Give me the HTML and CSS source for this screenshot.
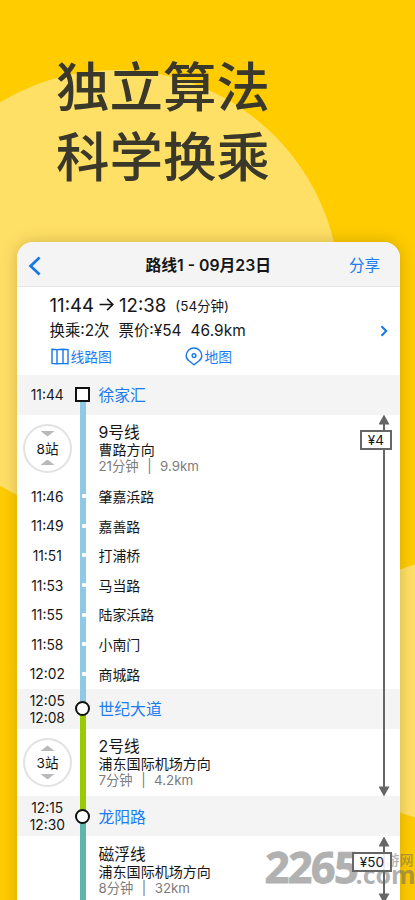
FILE: index.html
```
<!DOCTYPE html>
<html lang="zh-CN">
<head>
<meta charset="utf-8">
<title>路线1</title>
<link rel="stylesheet" href="styles.css">
</head>
<body>
<main class="poster">
  <div class="disc disc-left"></div>
  <div class="disc disc-right"></div>
  <h1 class="slogan">独立算法<br>科学换乘</h1>

  <section class="card">
    <header class="nav">
      <svg class="back" viewBox="0 0 14 20"><path d="M11.6 1.6 2.6 10l9 8.4"/></svg>
      <span class="nav-title">路线1 - 09月23日</span>
      <span class="share">分享</span>
    </header>

    <div class="summary">
      <div class="times"><span class="big">11:44</span><svg class="arrow" viewBox="0 0 14 14"><path d="M.5 7h12.4M7.6 1.8 12.9 7l-5.3 5.2"/></svg><span class="big">12:38</span><span class="dur">(54分钟)</span></div>
      <div class="facts"><span class="f1">换乘:2次</span><span class="f2">票价:¥54</span><span class="f3">46.9km</span><svg class="chev" viewBox="0 0 8 12"><path d="M1.5 1.3 6.2 6l-4.7 4.7"/></svg></div>
      <div class="links">
        <span class="link link-map"><svg class="ico-map" viewBox="0 0 18 17"><path d="M1 1.2 6 1.600l6-.4 5 .4v14.200l-5-.4-6 .4-5-.4zM6 1.600v14.200M12 1.200v14.200"/></svg>线路图</span>
        <span class="link"><svg class="ico-pin" viewBox="0 0 18 19"><path d="M9 17.8 4.2 14C2.2 12.600 1.200 10.800 1.200 8.700a7.800 7.700 0 0 1 15.600 0c0 2.100-1 3.900-3 5.300z"/><circle cx="9" cy="8.600" r="1.900"/></svg>地图</span>
      </div>
    </div>

    <div class="route">
      <div class="station first">
        <div class="when">11:44</div>
        <div class="rail"><i class="node square"></i></div>
        <div class="name">徐家汇</div>
      </div>
      <div class="leg blue">
        <div class="count closed"><i class="tri down"></i><span>8站</span><i class="tri up"></i></div>
        <div class="rail"></div>
        <div class="info"><b>9号线</b><span>曹路方向</span><small>21分钟<em>|</em>9.9km</small></div>
      </div>
      <div class="stop blue"><div class="when">11:46</div><div class="rail"></div><div class="name">肇嘉浜路</div></div>
      <div class="stop blue"><div class="when">11:49</div><div class="rail"></div><div class="name">嘉善路</div></div>
      <div class="stop blue"><div class="when">11:51</div><div class="rail"></div><div class="name">打浦桥</div></div>
      <div class="stop blue"><div class="when">11:53</div><div class="rail"></div><div class="name">马当路</div></div>
      <div class="stop blue"><div class="when">11:55</div><div class="rail"></div><div class="name">陆家浜路</div></div>
      <div class="stop blue"><div class="when">11:58</div><div class="rail"></div><div class="name">小南门</div></div>
      <div class="stop blue"><div class="when">12:02</div><div class="rail"></div><div class="name">商城路</div></div>
      <div class="station mid-a">
        <div class="when">12:05<br>12:08</div>
        <div class="rail"><i class="node round"></i></div>
        <div class="name">世纪大道</div>
      </div>
      <div class="leg green">
        <div class="count"><i class="tri up"></i><span>3站</span><i class="tri down"></i></div>
        <div class="rail"></div>
        <div class="info"><b>2号线</b><span>浦东国际机场方向</span><small>7分钟<em>|</em>4.2km</small></div>
      </div>
      <div class="station mid-b">
        <div class="when">12:15<br>12:30</div>
        <div class="rail"><i class="node round"></i></div>
        <div class="name">龙阳路</div>
      </div>
      <div class="leg teal">
        <div></div>
        <div class="rail"></div>
        <div class="info"><b>磁浮线</b><span>浦东国际机场方向</span><small>8分钟<em>|</em>32km</small></div>
      </div>

      <div class="mark"><span class="mark-num">2265</span><span class="mark-cn">手游网</span><span class="mark-com">.com</span></div>
      <div class="fare fare-a"><span class="price">¥4</span></div>
      <div class="fare fare-b"><span class="price">¥50</span></div>
    </div>
  </section>
</main>
</body>
</html>
```
FILE: styles.css
```
* { box-sizing: border-box; }
body {
  margin: 0;
  font-family: Inter, "Noto Sans CJK SC", sans-serif;
  color: #161616;
}
.poster {
  position: relative;
  width: 415px;
  height: 900px;
  overflow: hidden;
  background: #ffcc00;
  padding: 53px 15px 0 16.500px;
}
.disc { position: absolute; border-radius: 50%; background: #ffe066; }
.disc-left { left: -108px; top: 70px; width: 448px; height: 448px; }
.disc-right { left: 318px; top: 559.500px; width: 262px; height: 262px; }

.slogan {
  position: relative;
  margin: 0 0 0 39.500px;
  height: 189px;
  font-size: 53.500px;
  line-height: 70px;
  font-weight: 500;
  color: #3a382a;
}

.card {
  position: relative;
  height: 700px;
  border-radius: 16px 16px 0 0;
  background: #fff;
  box-shadow: 0 0 16px rgba(90, 70, 0, .28);
}
.nav {
  display: grid;
  grid-template-columns: 60px 1fr 60px;
  align-items: center;
  height: 44.500px;
  padding: 4.500px 0 0;
  border-bottom: 1.500px solid #e6e6e6;
  border-radius: 16px 16px 0 0;
  background: #f4f4f4;
}
.back { width: 14px; height: 20px; margin-left: 11px; }
svg path, svg circle { fill: none; stroke: #1677e6; stroke-linecap: butt; }
.back path { stroke-width: 2.700; }
.nav-title { text-align: center; font-size: 15.800px; font-weight: 600; line-height: 22px; }
.share { font-size: 15.500px; line-height: 22px; color: #1a7cf2; margin-left: 9px; }

.summary { height: 88px; padding: 6px 12px 0 33px; }
.times { display: flex; align-items: center; height: 24px; }
.big { font-size: 18.600px; line-height: 24px; }
.arrow { width: 15px; height: 15px; margin: 0 5px 0 5px; }
.arrow path { stroke: #161616; stroke-width: 1.500; }
.dur { font-size: 13.500px; line-height: 20px; margin: 2px 0 0 9px; }
.facts { display: flex; align-items: center; height: 28px; font-size: 15.400px; line-height: 26px; }
.f1 { margin-right: 9px; }
.f2 { margin-right: 9px; }
.f3 { letter-spacing: .1px; }
.chev { width: 8px; height: 12px; margin-left: auto; }
.chev path { stroke-width: 2; }
.links { display: flex; height: 24px; align-items: center; }
.link { display: flex; align-items: center; font-size: 13.800px; line-height: 22px; color: #1a7cf2; }
.link-map { width: 135px; }
.ico-map { width: 18px; height: 17px; margin: 0 2px 0 1px; }
.ico-pin { width: 18px; height: 19px; margin-right: 2px; }
.link path, .link circle { stroke-width: 1.400; }

.route { position: relative; height: 567px; }
.station, .leg, .stop { display: grid; grid-template-columns: 63.500px 5.500px 1fr; column-gap: 0; }
.station { height: 40px; background: #f4f4f4; align-items: center; }
.mid-a, .mid-b { height: 40.300px; }
.when { text-align: center; padding: 2px 2px 0 0; font-size: 13.800px; line-height: 17px; }
.rail { align-self: stretch; display: flex; align-items: center; justify-content: center; background: #8ecae6; }
.name { padding: 1.500px 0 0 13px; }
.station .name { font-size: 15.800px; line-height: 24px; color: #1a7cf2; padding-top: 3px; }
.first .rail { background: linear-gradient(#f4f4f4 50%, #8ecae6 50%); }
.mid-a .rail { background: linear-gradient(#8ecae6 50%, #99cc00 50%); }
.mid-b .rail { background: linear-gradient(#99cc00 50%, #5eb5ab 50%); }
.node { flex: none; width: 15px; height: 15px; border: 2px solid #111; background: #fff; }
.round { border-radius: 50%; }
.leg { height: 67px; }
.green .rail { background: #99cc00; }
.teal .rail { background: #5eb5ab; }
.count {
  display: flex;
  flex-direction: column;
  align-items: center;
  justify-content: space-between;
  width: 49px;
  height: 49px;
  margin: 9px 0 0 6.500px;
  padding: 5.500px 0;
  border: 2.500px solid #e2e2e2;
  border-radius: 50%;
  font-size: 13.600px;
  line-height: 16px;
}
.count span { padding-top: 1px; }
.tri { width: 14px; height: 5.500px; background: #b9b9b9; }
.tri.down { clip-path: polygon(0 0, 100% 0, 50% 100%); }
.tri.up { clip-path: polygon(0 100%, 100% 100%, 50% 0); }
.info { display: flex; flex-direction: column; padding: 8.500px 0 0 13px; }
.info b { font-size: 15.800px; font-weight: 400; line-height: 19px; }
.info span { font-size: 14.050px; line-height: 16px; }
.info small { font-size: 13.300px; line-height: 17px; color: #7c7c7c; }
.info em { font-style: normal; margin: 0 8.500px; }
.stop { height: 29.600px; align-items: center; }
.stop .name { font-size: 13.950px; line-height: 20px; }
.stop .rail::after { content: ""; width: 4px; height: 4px; background: #fff; border-radius: 1px; margin: 0 0 0 2px; }

.fare { position: absolute; right: 8px; width: 40px; display: flex; justify-content: flex-end; padding-top: 15px; }
.fare::before {
  content: "";
  position: absolute;
  right: 2.500px;
  top: 0;
  width: 11px;
  height: 100%;
  background: #666;
  clip-path: polygon(50% 0, 100% 10px, 59% 10px, 59% calc(100% - 10px), 100% calc(100% - 10px), 50% 100%, 0 calc(100% - 10px), 41% calc(100% - 10px), 41% 10px, 0 10px);
}
.fare-a { top: 40px; height: 382px; }
.fare-b { top: 462px; height: 67px; }
.price {
  position: relative;
  height: 20px;
  padding: 0 6px;
  border: 2px solid #666;
  background: #fff;
  font-size: 13.500px;
  line-height: 17px;
}
.fare-b .price { background: rgba(255, 255, 255, .88); }

.mark { position: absolute; left: 248px; top: 470px; width: 155px; height: 44px; opacity: .5; color: #666; }
.mark span { position: absolute; white-space: nowrap; -webkit-text-stroke-color: #666; stroke-linejoin: round; }
.mark-num { left: 0; top: 0; font: 700 43px/44px "Open Sans", sans-serif; letter-spacing: -1.500px; -webkit-text-stroke-width: 1px; transform: skewX(-2deg); }
.mark-cn { left: 107px; top: 5px; font: 500 14px/18px "Noto Sans CJK SC", sans-serif; }
.mark-com { left: 91px; top: 13px; font: 700 25px/32px "Open Sans", sans-serif; }
```
